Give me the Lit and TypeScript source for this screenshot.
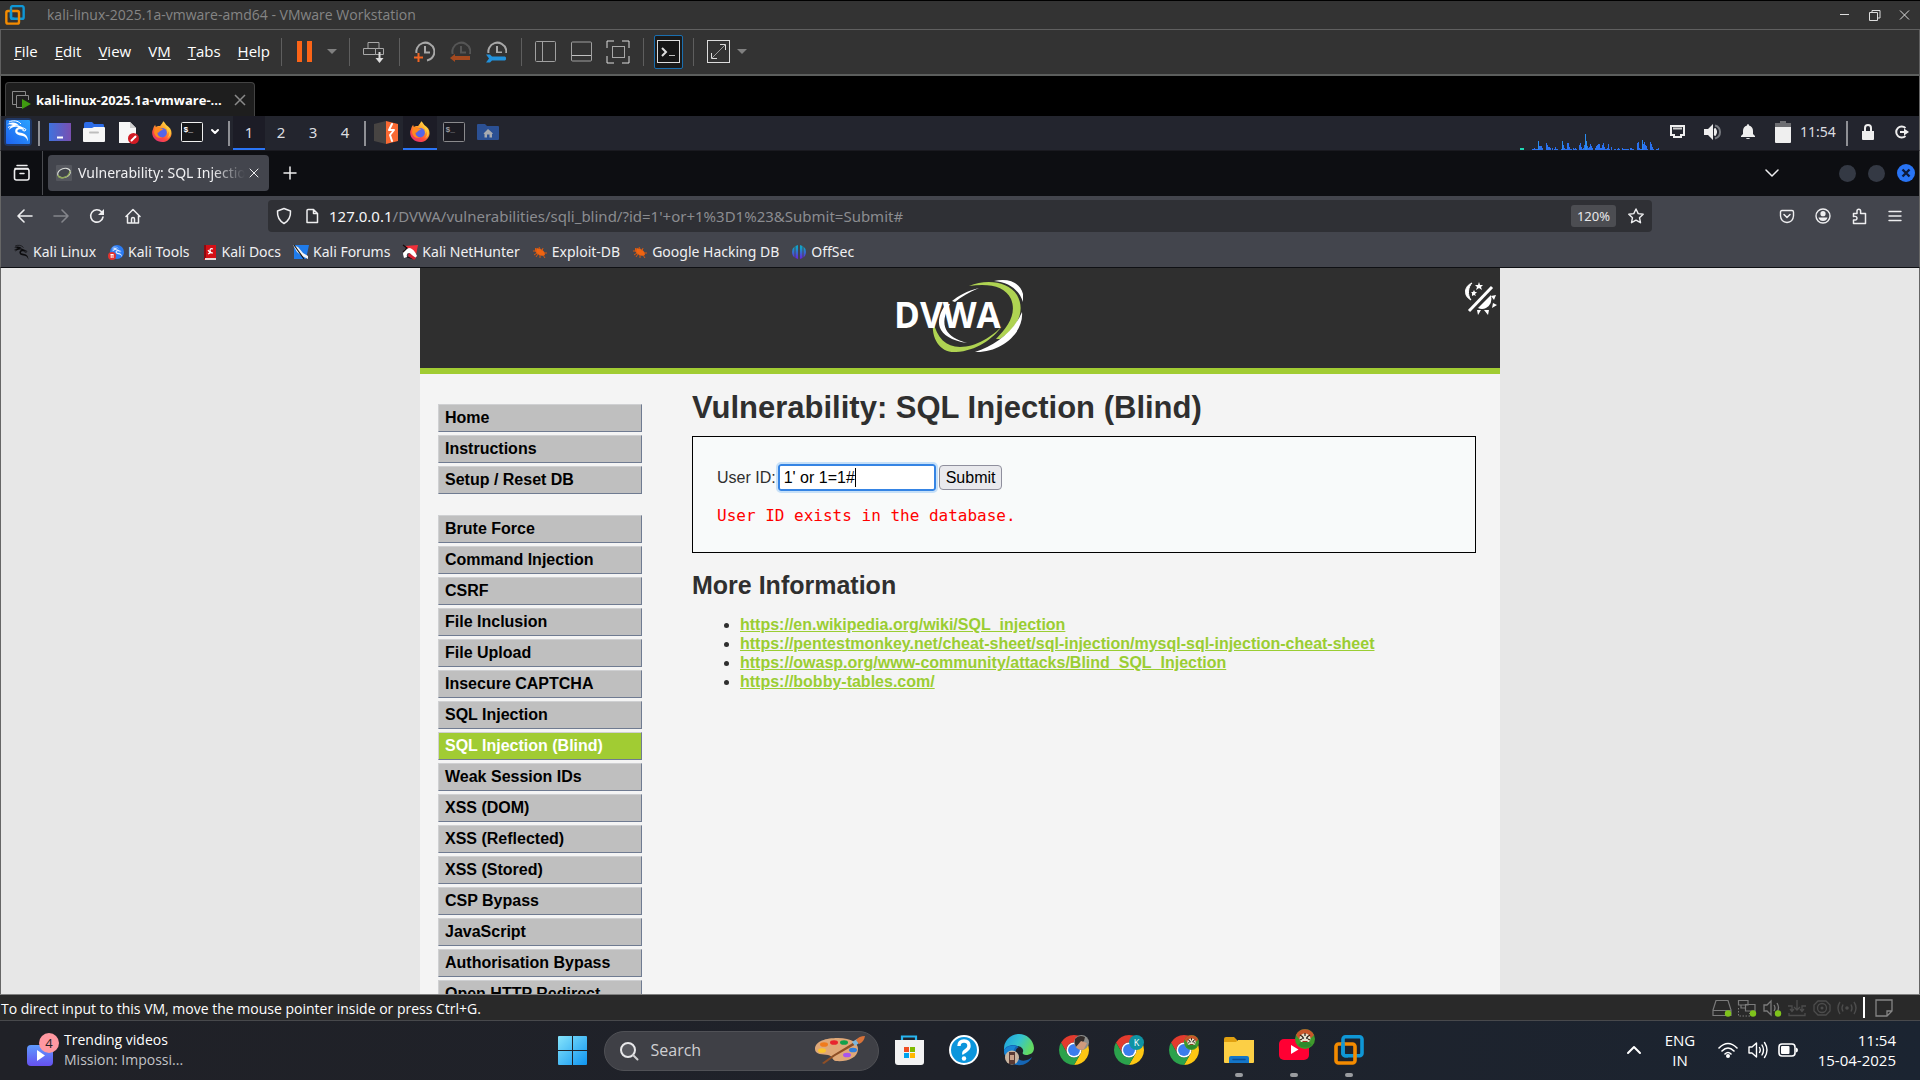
import { LitElement, html, svg, css, TemplateResult } from "lit";
import { customElement, state } from "lit/decorators.js";
import { classMap } from "lit/directives/class-map.js";

type Art = TemplateResult;

/* Wraps drawing content in an svg element of the given size and view box. */
const pic = (w: number, h: number, box: string, body: Art, cls = "ico") =>
  html`<svg class=${cls} width=${w} height=${h} viewBox=${box} aria-hidden="true">${body}</svg>`;

const line = (d: string, color: string, width = 1) =>
  svg`<path d=${d} fill="none" stroke=${color} stroke-width=${width} stroke-linecap="round" stroke-linejoin="round" />`;
const sharp = (d: string, color: string, width = 1) =>
  svg`<path d=${d} fill="none" stroke=${color} stroke-width=${width} />`;
const fill = (d: string, color: string) => svg`<path d=${d} fill=${color} />`;

const vmwareArt = svg`
  <rect x="9" y="1.7" width="19" height="19" rx="2.5" fill="none" stroke="#0f97d6" stroke-width="3.6" />
  <rect x="2" y="9" width="19" height="19" rx="2.5" fill="none" stroke="#f48b00" stroke-width="3.6" />
  <path d="M9 7.2V18.2a2.5 2.5 0 0 0 2.5 2.5H14" fill="none" stroke="#0f97d6" stroke-width="3.6" />`;

const firefoxArt = svg`
  <defs>
    <linearGradient id="ffBody" x1="0.8" y1="0" x2="0.2" y2="1">
      <stop offset="0" stop-color="#ffe14a" /><stop offset="0.4" stop-color="#ff9a2b" />
      <stop offset="0.7" stop-color="#ff4b3e" /><stop offset="1" stop-color="#e0307a" />
    </linearGradient>
  </defs>
  <path d="M2 9C2.4 6.700 3.400 5 4.400 3.800C4.400 4.800 4.700 5.700 5.200 6.200C6.200 5.300 8 4.900 9.600 5.200C10.600 3.400 12.200 2.300 12.700 0.300C14.200 1.200 15 2.900 16 4.100C19.400 6.200 21.600 9.200 21.500 12.800C21.300 18.300 17 22 11.700 22C5.800 22 1.400 17.800 1.200 12.300C1.100 11.100 1.500 9.900 2 9Z" fill="url(#ffBody)" />
  <circle cx="11.600" cy="12.200" r="5" fill="#5566e8" />
  <path d="M4 7.500C6.500 5.600 9 6.400 10 7.600C11.500 7.700 12.400 8.200 12.500 8.700C11.900 9.900 10 9.800 9 11C8.400 12 7.600 12.600 6.600 12C6.600 15 9 17.200 12 17C8 19 3.400 16 3.200 11.500Z" fill="#ff8a1f" />
  <path d="M14.500 5C17 7.500 17.600 10 17 13C18.200 12 18.400 11 18.500 10C19.600 13 19 16 17 18C21.500 15.600 22 9.500 17.600 6.200C16.500 5.500 15 3.500 14.500 5Z" fill="#ffd23e" opacity="0.85" />`;

const dragon = (color: string) => svg`
  <path d="M1 5.500C5 2.500 10 2.800 13 6.500C11.500 6 10 6.100 9 6.600C13.500 6 17.500 8 18.200 11.500C15 9.700 11.500 10.200 11.400 12C11.300 14 15.500 13.300 18.500 15C21 16.500 22 19 22 22.500C21 19.500 19.500 17.600 17 16.900C13.800 16 9.700 16 9.200 12.400C9 10 10.500 8.700 12.500 8.200C8.500 7 5 8.500 3 11C3.500 8.500 5 7 7 6C5 5 3 5 1 5.500Z" fill=${color} />
  <path d="M3 3C7 1 12 1.500 15 5M2 8.500C3.500 7.500 5 7 7 7M16.500 8.500L20 10.500L19 12L16.500 11.500" fill="none" stroke=${color} stroke-width="1" />`;

const chromeArt = svg`
  <path d="M24 13H43.050A22 22 0 0 0 4.950 13L14.470 29.500A11 11 0 0 1 24 13Z" fill="#e33b2e" />
  <path d="M43.050 13A22 22 0 0 1 24 46L33.530 29.500A11 11 0 0 0 24 13Z" fill="#fdc713" />
  <path d="M4.950 13A22 22 0 0 0 24 46L33.530 29.500A11 11 0 0 1 14.470 29.500Z" fill="#2ba24c" />
  <circle cx="24" cy="24" r="11" fill="#fff" /><circle cx="24" cy="24" r="8.700" fill="#3b7ded" />`;

const tigerArt = svg`
  <circle cx="10" cy="10" r="10" fill="#3f9a2c" />
  <path d="M1 6A10 10 0 0 1 19 6L16 9L10 7L4 10Z" fill="#c9562a" />
  <ellipse cx="10" cy="9.500" rx="5.500" ry="5" fill="#e8e2d0" />
  <path d="M5 6L8 8M15 6L12 8M10 4V7M5 11L7 10M15 11L13 10" stroke="#3a2416" stroke-width="1.300" />
  <circle cx="8" cy="9" r="1" fill="#222" /><circle cx="12" cy="9" r="1" fill="#222" />
  <path d="M7 12H13L10 15Z" fill="#a3301c" /><path d="M3 16Q10 21 17 16L14 13L6 13Z" fill="#2c8a2c" />`;

const clockArt = (color: string) => svg`
  ${sharp("M4 14A9 9 0 1 1 14 19.500", color, 2)}${sharp("M12 5V11.500H17", color, 2)}`;

const terminalArt = (bg: string, edge: string, ink: string) => svg`
  <rect x="0.500" y="0.500" width="21" height="19" rx="1" fill=${bg} stroke=${edge} />
  <text x="2.500" y="10" font-family="Liberation Mono, monospace" font-weight="700" font-size="8" fill=${ink}>$_</text>`;

const bugArt = svg`
  <ellipse cx="8" cy="8" rx="5.500" ry="3" transform="rotate(32 8 8)" fill="#ee6412" />
  <path d="M3 4L5 6M1 7H5M2 11L5 9M7 3L8 5M11 4L10 7M15 9L12 9M8 14L8 11M13 14L11 11M4 13L6 10" stroke="#d9570e" stroke-width="1" />`;

const BOOKMARKS: { label: string; art: Art }[] = [
  { label: "Kali Linux", art: svg`<g transform="scale(0.700)">${dragon("#0b0b0d")}</g>` },
  {
    label: "Kali Tools",
    art: svg`<circle cx="9" cy="8" r="7" fill="#2b7bf2" /><g transform="translate(3 2) scale(0.500)">${dragon("#dce9ff")}</g>
      <circle cx="4" cy="12" r="4" fill="#e0322f" /><path d="M2.500 10.500H5.500M3.200 10.500V14M5 10.500V14" stroke="#fff" stroke-width="1" />`,
  },
  {
    label: "Kali Docs",
    art: svg`<path d="M2 1H14V16H2Z" fill="#d40f16" /><path d="M2 1H4V15H2Z" fill="#8c0a10" /><path d="M3 14H14V16H3Z" fill="#e8d8d8" />
      <path d="M11 5Q8 4 8 6.500T11 9M6 6L8 9L6 10" fill="none" stroke="#fff" stroke-width="1.200" />`,
  },
  {
    label: "Kali Forums",
    art: svg`<path d="M1 1H16L13 15H1Z" fill="#1f7bea" /><path d="M0 1L5 3L10 9L15 12L15 15L9 12L4 8Z" fill="#f4f4f4" />
      <path d="M1 1L6 8L11 15" stroke="#161616" stroke-width="1.200" fill="none" />`,
  },
  {
    label: "Kali NetHunter",
    art: svg`<path d="M3 2L16 1L14 11L9 8Z" fill="#f0303a" /><path d="M1 10Q1 4 8 4Q12 5 15 12L12 15Q9 9 7 9Q4 9 5 13L2 14Z" fill="#fff" />
      <path d="M1 1L5 4L1 8M5 13L12 15" stroke="#19090b" stroke-width="1.300" fill="none" /><path d="M7 9L14 14L12 16L6 12Z" fill="#d51f33" />`,
  },
  { label: "Exploit-DB", art: bugArt },
  { label: "Google Hacking DB", art: bugArt },
  {
    label: "OffSec",
    art: svg`<defs><linearGradient id="off" x1="0" y1="0" x2="0" y2="1"><stop offset="0.200" stop-color="#12a0c8" /><stop offset="1" stop-color="#6a1fe0" /></linearGradient></defs>
      <path d="M3.500 2.500V13.500Q1 11.500 1 8T3.500 2.500ZM4.500 2L7 1V15L4.500 14ZM9 1L11.500 2V14L9 15ZM12.500 2.500Q15 4.500 15 8T12.500 13.500Z" fill="url(#off)" />`,
  },
];

const MENU_TOP = ["Home", "Instructions", "Setup / Reset DB"];
const MENU_VULNS = [
  "Brute Force", "Command Injection", "CSRF", "File Inclusion", "File Upload", "Insecure CAPTCHA",
  "SQL Injection", "SQL Injection (Blind)", "Weak Session IDs", "XSS (DOM)", "XSS (Reflected)",
  "XSS (Stored)", "CSP Bypass", "JavaScript", "Authorisation Bypass", "Open HTTP Redirect",
];
const LINKS = [
  "https://en.wikipedia.org/wiki/SQL_injection",
  "https://pentestmonkey.net/cheat-sheet/sql-injection/mysql-sql-injection-cheat-sheet",
  "https://owasp.org/www-community/attacks/Blind_SQL_Injection",
  "https://bobby-tables.com/",
];

/* CPU load, one bar per sample. */
const LOAD = [
  1, 1, 2, 1, 1, 1, 9, 4, 4, 4, 2, 0, 0, 0, 7, 5, 3, 3, 2, 0, 2, 0, 1, 3, 1, 1, 0, 0, 0, 1, 9, 5, 2, 1, 1, 7, 7, 3, 1, 1, 0, 2,
  1, 2, 1, 0, 0, 5, 7, 3, 1, 2, 5, 16, 9, 4, 2, 3, 6, 4, 2, 0, 0, 2, 4, 5, 6, 6, 2, 2, 5, 7, 3, 1, 1, 2, 6, 1, 0, 3, 0, 0, 1,
  1, 0, 1, 2, 1, 0, 0, 2, 1, 1, 1, 1, 1, 1, 0, 2, 2, 1, 1, 0, 0, 0, 7, 8, 2, 1, 1, 10, 6, 8, 5, 4, 1, 0, 0, 8, 6, 3, 1, 0, 0, 1, 1, 2,
];

@customElement("vm-chrome")
export class VmChrome extends LitElement {
  static styles = css`
    :host { display: block; background: #333; color: #fff; font: 15px/20px "Open Sans", "Noto Sans", sans-serif; }
    .title { display: flex; align-items: center; height: 28px; padding: 0 0 0 5px; border-top: 1px solid #000; color: #858585; font-size: 14px; }
    .title span { flex: 1; margin-left: 22px; }
    .title svg { display: block; }
    button { border: 0; margin: 0; padding: 0; background: none; color: inherit; font: inherit; display: flex; align-items: center; justify-content: center; }
    .win { width: 30px; }
    .bar { display: flex; align-items: center; height: 43px; padding: 0 0 1px 13px; border: 1px solid #606060; border-bottom: 2px solid #5c5e5d; }
    .menu { display: flex; gap: 17px; width: 260px; padding-bottom: 2px; flex: none; }
    .menu u { text-underline-offset: 2px; }
    .sep { width: 1px; height: 28px; background: #5e5e5e; margin: 0 6px 0 7px; flex: none; }
    .tool { width: 36px; height: 36px; }
    .pause { width: 34px; }
    .drop { width: 20px; }
    .on { width: 29px; height: 34px; margin: 0 3px 0 4px; background: #1a1a1a; border: 1px solid #1a6fb0; border-radius: 2px; }
    .tabs { display: flex; height: 40px; padding: 6px 0 0 4px; background: #000; border-left: 1px solid #666; border-right: 1px solid #666; box-sizing: border-box; }
    .tab { display: flex; align-items: center; gap: 5px; padding: 0 8px 0 6px; width: 234px; background: #1e1e1e; border: 1px solid #434343; border-bottom: 0; border-radius: 4px 4px 0 0; font-weight: 700; font-size: 13px; }
    .tab span { flex: 1; white-space: nowrap; }
  `;
  render() {
    const g = "#a8a8a8";
    return html`
      <div class="title">
        ${pic(20, 20, "0 0 30 30", vmwareArt)}
        <span>kali-linux-2025.1a-vmware-amd64 - VMware Workstation</span>
        <button class="win" aria-label="Minimize">${pic(12, 12, "0 0 12 12", sharp("M1 5.500H10", "#ddd"))}</button>
        <button class="win" aria-label="Restore">${pic(12, 12, "0 0 12 12", sharp("M0.500 3.500H8.500V11.500H0.500ZM3 3V1.500H11V9H9", "#ddd"))}</button>
        <button class="win" aria-label="Close">${pic(12, 12, "0 0 12 12", sharp("M1 1.500L10 10.500M10 1.500L1 10.500", "#ddd"))}</button>
      </div>
      <div class="bar">
        <nav class="menu">
          <button><span><u>F</u>ile</span></button><button><span><u>E</u>dit</span></button><button><span><u>V</u>iew</span></button>
          <button><span>V<u>M</u></span></button><button><span><u>T</u>abs</span></button><button><span><u>H</u>elp</span></button>
        </nav>
        <i class="sep"></i>
        <button class="pause" aria-label="Suspend">${pic(18, 22, "0 0 18 22", fill("M1 0H6V21H1ZM11 0H16V21H11Z", "#fb6417"))}</button>
        <button class="drop" aria-label="Power options">${pic(10, 6, "0 0 10 6", fill("M0 0H10L5 5Z", "#808080"))}</button>
        <i class="sep"></i>
        <button class="tool" aria-label="Send keys">${pic(22, 22, "0 0 22 22", svg`${sharp("M5 7V1.500H16V7M0.500 7.500H12.500V13.500H0.500ZM12.500 7.500H20.500V13.500H12.500", g)}${sharp("M16.500 11V20", "#ddd", 2)}${fill("M12.500 17H20.500L16.500 22Z", "#ddd")}`)}</button>
        <i class="sep"></i>
        <button class="tool" aria-label="Take snapshot">${pic(22, 22, "0 0 22 22", svg`${clockArt(g)}<rect y="12" width="6" height="10" fill="#333" />${sharp("M1 16.500H10M5.500 12V21", "#f06423", 2)}`)}</button>
        <button class="tool" aria-label="Revert snapshot">${pic(22, 22, "0 0 22 22", svg`${clockArt("#555")}<rect y="13" width="22" height="8" fill="#333" />${fill("M1 17L6 13V15H21V19H6V21Z", "#a4491f")}`)}</button>
        <button class="tool" aria-label="Manage snapshots">${pic(22, 22, "0 0 22 22", svg`${clockArt(g)}<rect y="12" width="22" height="10" fill="#333" />${fill("M1 13.500H5L7 15.500H20L21 16.500V18.500L20 19.500H7L5 21.500H1L4 17.500Z", "#2292dc")}`)}</button>
        <i class="sep"></i>
        <button class="tool" aria-label="Library">${pic(22, 22, "0 0 22 22", svg`<rect x="0.500" y="0.500" width="20" height="20" rx="1" fill="none" stroke="#a0a0a0" />${sharp("M7.500 1V20", "#a0a0a0")}`)}</button>
        <button class="tool" aria-label="Thumbnail bar">${pic(22, 22, "0 0 22 22", svg`<rect x="0.500" y="1" width="20" height="19" rx="1" fill="none" stroke="#a0a0a0" />${sharp("M1 14.500H20", "#c0c0c0")}`)}</button>
        <button class="tool" aria-label="Full screen">${pic(24, 24, "0 0 24 24", svg`${sharp("M8 1H1V8M16 1H23V8M1 16V23H8M23 16V23H16", "#ddd", 1)}<rect x="6.500" y="6.500" width="12" height="11" fill="none" stroke=${g} />`)}</button>
        <i class="sep"></i>
        <button class="on" aria-label="Console view">${pic(23, 23, "0 0 23 23", svg`<rect x="0.500" y="0.500" width="22" height="22" fill="#151515" stroke="#ddd" />${sharp("M5 8L9 12L5 16", "#ddd", 2)}${sharp("M12 15.500H18", "#bbb")}`)}</button>
        <i class="sep"></i>
        <button class="tool" aria-label="Stretch guest">${pic(23, 23, "0 0 23 23", svg`<rect x="0.500" y="0.500" width="22" height="22" fill="none" stroke="#ddd" />${sharp("M4.500 13V18.500H10M13 4.500H18.500V10", "#ddd")}${sharp("M5 18L18 5", "#999")}`)}</button>
        <button aria-label="Stretch options">${pic(12, 6, "0 0 12 6", fill("M1 0H11L6 5Z", "#808080"))}</button>
      </div>
      <div class="tabs">
        <div class="tab">
          ${pic(19, 18, "0 0 19 18", svg`${sharp("M13.500 4V0.500H0.500V13.500H4M10 16.500H4.500V4.500H16.500V9", "#8a8a8a")}${fill("M10 8L19 13L10 18Z", "#3f9a10")}`)}
          <span>kali-linux-2025.1a-vmware-...</span>
          <button aria-label="Close tab">${pic(12, 12, "0 0 12 12", sharp("M1 1L11 11M11 1L1 11", "#8a8a8a", 1.5))}</button>
        </div>
      </div>`;
  }
}

@customElement("kali-panel")
export class KaliPanel extends LitElement {
  static styles = css`
    :host { display: flex; align-items: center; height: 34px; box-sizing: content-box; background: #23252e; color: #dcdde0; border-bottom: 1px solid #1a1a20; border-left: 1px solid #555; border-right: 1px solid #666; font: 15px/20px "Noto Sans", sans-serif; }
    button { display: flex; align-items: center; justify-content: center; align-self: stretch; width: 34px; padding: 0; border: 0; background: none; color: inherit; font: inherit; border-bottom: 2px solid transparent; }
    .active { background: #1c1c26; border-bottom-color: #2a74f5; }
    .ws { width: 32px; }
    .term { width: 26px; }
    .chev { width: 20px; }
    .gap { flex: 1; }
    .sep { width: 2px; height: 25px; background: #8f9095; margin: 0 3px; flex: none; }
    .graph { align-self: flex-end; }
    .tray { width: 35px; }
    time { width: 43px; padding-bottom: 2px; white-space: nowrap; font-size: 14px; }
  `;
  render() {
    return html`
      <button aria-label="Applications">${pic(28, 28, "0 0 28 28", svg`
        <defs><linearGradient id="kb" x1="0" y1="1" x2="1" y2="0"><stop offset="0" stop-color="#1e63f0" /><stop offset="1" stop-color="#2aa2ff" /></linearGradient></defs>
        <rect x="0" y="0" width="28" height="28" rx="4" fill="#1e58c8" opacity="0.350" /><rect x="2" y="2" width="24" height="24" rx="1" fill="url(#kb)" />
        <g transform="translate(2 1)">${dragon("#fff")}</g>`)}</button>
      <i class="sep"></i>
      <button aria-label="Show desktop">${pic(22, 18, "0 0 22 18", svg`
        <defs><linearGradient id="dk"><stop offset="0" stop-color="#3f72dd" /><stop offset="1" stop-color="#7a4fb0" /></linearGradient></defs>
        <rect width="22" height="18" fill="url(#dk)" />${sharp("M8 14.500H14", "#fff", 2)}`)}</button>
      <button aria-label="Files">${pic(22, 20, "0 0 22 20", svg`${fill("M1 2Q1 0 3 0H9L11 2H20Q21 2 21 4V9H1Z", "#2c6ce8")}${fill("M0 7Q0 6 1 6H9L11 5H21Q22 5 22 6V19Q22 20 21 20H1Q0 20 0 19Z", "#f6f6f6")}${line("M7 10.500H15", "#bdbdbd", 2)}`)}</button>
      <button aria-label="Text editor">${pic(22, 23, "0 0 22 23", svg`${fill("M2 1H13L19 7V22H2Z", "#f7f7f7")}${fill("M13 1V7H19Z", "#cfcfcf")}<circle cx="16.500" cy="17.500" r="5.500" fill="#d11b24" />${line("M14.500 19.500L18.500 15.500", "#fff", 2)}`)}</button>
      <button aria-label="Firefox">${pic(22, 22, "0 0 23 23", firefoxArt)}</button>
      <button class="term" aria-label="Terminal">${pic(22, 20, "0 0 22 20", terminalArt("#17181b", "#f0f0f0", "#fff"))}</button>
      <button class="chev" aria-label="More launchers">${pic(10, 8, "0 0 10 8", line("M2 2L5 5L8 2", "#fff", 2))}</button>
      <i class="sep"></i>
      ${[1, 2, 3, 4].map((n) => html`<button class=${classMap({ ws: true, active: n === 1 })}>${n}</button>`)}
      <i class="sep"></i>
      <button aria-label="Burp Suite">${pic(24, 23, "0 0 24 23", svg`${fill("M0 3L12 0V23L0 20Z", "#474442")}${fill("M12 0L24 3V20L12 23Z", "#fb6a33")}${line("M18 3L15 9H20L16 14L18 20", "#fff", 2)}`)}</button>
      <button class="active" aria-label="Firefox window">${pic(22, 22, "0 0 23 23", firefoxArt)}</button>
      <button aria-label="Terminal window">${pic(22, 20, "0 0 22 20", terminalArt("#1b1b22", "#8a8a8d", "#9a9a9d"))}</button>
      <button aria-label="Home folder">${pic(22, 16, "0 0 22 16", svg`${fill("M0 1Q0 0 1 0H8L10 2H21Q22 2 22 3V15Q22 16 21 16H1Q0 16 0 15Z", "#2b5093")}${fill("M11 5L16 9.500L15 10V13.500H12.500V10.500H10V13.500H7.500V10L6.500 9.500Z", "#a8abb0")}`)}</button>
      <span class="gap"></span>
      ${pic(140, 18, "0 0 140 18", svg`<rect y="16" width="4" height="2" fill="#1fd8b4" />
        ${LOAD.map((v, i) => (v ? svg`<rect x=${12 + i} y=${18 - v} width="1" height=${v} fill=${v > 8 ? "#2a8cf0" : "#2a72f0"} />` : svg``))}`, "graph")}
      <button class="tray" aria-label="Network">${pic(17, 14, "0 0 17 14", svg`<path d="M2 1H15V10H12V12H5V10H2Z" fill="none" stroke="#eee" stroke-width="2" />${sharp("M4 3.500H13", "#ccc", 2)}`)}</button>
      <button class="tray" aria-label="Volume">${pic(18, 16, "0 0 18 16", svg`${fill("M0 5H4L9 0V16L4 11H0Z", "#eee")}${fill("M10 4Q13 8 10 12Z", "#eee")}${sharp("M11 1.500Q16 3 16 8T11 14.500", "#777a80", 2)}${sharp("M10.500 4.500Q13.500 8 10.500 11.500", "#eee", 2)}`)}</button>
      <button class="tray" aria-label="Notifications">${pic(14, 16, "0 0 14 16", fill("M7 0Q8 0 8 1.500Q12 2.500 12 7V10L14 12V13H0V12L2 10V7Q2 2.500 6 1.500Q6 0 7 0ZM5 14H9Q9 15 7 15T5 14Z", "#eee"))}</button>
      <button class="tray" aria-label="Battery">${pic(16, 22, "0 0 16 22", svg`${fill("M5 0H11V2H16V7H0V2H5Z", "#6d6e72")}${fill("M0 6H16V21Q16 22 15 22H1Q0 22 0 21Z", "#efefef")}`)}</button>
      <time>11:54</time>
      <i class="sep"></i>
      <button aria-label="Lock">${pic(14, 16, "0 0 14 16", svg`${fill("M1 7H13V15Q13 16 12 16H2Q1 16 1 15Z", "#eee")}${sharp("M4 8V4Q4 1 7 1T10 4V8", "#eee", 2)}`)}</button>
      <button aria-label="Log out">${pic(16, 14, "0 0 16 14", svg`${sharp("M11.500 3A5.500 5.500 0 1 0 11.500 11", "#eee", 2)}${sharp("M6 7H12", "#eee", 2)}${fill("M10 3.500L15 7L10 10.500Z", "#eee")}`)}</button>`;
  }
}

@customElement("fox-toolbar")
export class FoxToolbar extends LitElement {
  static styles = css`
    :host { display: block; background: #43454d; color: #f0f0f2; border-left: 1px solid #666; border-right: 1px solid #666; border-bottom: 1px solid #0f1014; font: 15px/20px "Noto Sans", sans-serif; }
    button { display: flex; align-items: center; justify-content: center; padding: 0; border: 0; background: none; color: inherit; font: inherit; flex: none; }
    .tabs { display: flex; align-items: center; height: 44px; padding-bottom: 1px; background: #0d0e12; }
    .all { width: 42px; height: 44px; border-right: 1px solid #4a4b50; }
    .tab { display: flex; align-items: center; width: 221px; height: 36px; margin-left: 5px; padding: 0 6px 0 8px; box-sizing: border-box; background: #43454d; border-radius: 4px; }
    .name { flex: 1; margin: 0 0 0 6px; overflow: hidden; white-space: nowrap; font-size: 14px; mask-image: linear-gradient(90deg, #000 80%, transparent); }
    .x { width: 18px; height: 20px; }
    .plus { width: 42px; }
    .gap { flex: 1; }
    .list { width: 36px; margin-right: 49px; }
    .dots { display: flex; align-items: center; gap: 12px; margin-right: 4px; }
    .dots button { width: 17px; height: 17px; border-radius: 50%; background: #343944; }
    .dots .shut { width: 18px; height: 18px; background: #2874f5; }
    .nav { display: flex; align-items: center; height: 40px; padding: 0 6px; }
    .nav > button { width: 36px; height: 32px; }
    .addr { display: flex; align-items: center; flex: 1; height: 32px; margin: 0 117px; padding: 0 8px; background: #2f3035; border-radius: 4px; color: #8b8c90; }
    .addr b { color: #f6f6f8; font-weight: 400; }
    .url { flex: 1; margin-left: 10px; white-space: nowrap; }
    .addr .page { margin-left: 13px; }
    .zoom { width: 45px; height: 22px; margin-right: 12px; background: #4c4d52; border-radius: 3px; color: #e8e8ea; font-size: 13px; }
    .marks { display: flex; gap: 12px; height: 31px; align-items: center; padding: 0 12px; }
    .marks a { display: flex; align-items: center; gap: 4px; color: inherit; text-decoration: none; white-space: nowrap; font-size: 14px; }
  `;
  render() {
    const c = "#eeeef0";
    return html`
      <div class="tabs">
        <button class="all" aria-label="View all tabs">${pic(18, 18, "0 0 18 18", svg`${line("M4 1.500H14", c, 1.5)}<rect x="1.500" y="5" width="14.500" height="11" rx="2" fill="none" stroke=${c} stroke-width="1.600" />${line("M2 4.500H15M7 9.500H11", c, 1.5)}`)}</button>
        <div class="tab">
          ${pic(16, 16, "0 0 16 16", svg`<rect width="16" height="16" rx="1" fill="#55575e" /><ellipse cx="8" cy="8" rx="6.500" ry="4.500" transform="rotate(-18 8 8)" fill="#42454c" stroke="#d9dbd8" stroke-width="1.200" /><path d="M2 10Q3 13.500 8 12.500T14 6" fill="none" stroke="#8ea857" stroke-width="1.300" />`)}
          <p class="name">Vulnerability: SQL Injection (Blind)</p>
          <button class="x" aria-label="Close tab">${pic(10, 10, "0 0 10 10", line("M1 1L9 9M9 1L1 9", c, 1))}</button>
        </div>
        <button class="plus" aria-label="New tab">${pic(14, 14, "0 0 14 14", line("M7 1V13M1 7H13", c, 1.5))}</button>
        <span class="gap"></span>
        <button class="list" aria-label="List tabs">${pic(14, 10, "0 0 14 10", line("M1 2L7 8L13 2", c, 1.5))}</button>
        <div class="dots"><button aria-label="Minimize"></button><button aria-label="Maximize"></button>
          <button class="shut" aria-label="Close">${pic(10, 10, "0 0 10 10", sharp("M1.500 1.500L8.500 8.500M8.500 1.500L1.500 8.500", "#0d1a3a", 2.4))}</button></div>
      </div>
      <div class="nav">
        <button aria-label="Back">${pic(16, 14, "0 0 16 14", line("M15 7H1M7 1L1 7L7 13", c, 1.6))}</button>
        <button aria-label="Forward">${pic(16, 14, "0 0 16 14", line("M1 7H15M9 1L15 7L9 13", "#84858b", 1.6))}</button>
        <button aria-label="Reload">${pic(16, 16, "0 0 16 16", svg`${line("M14 9A6.200 6.200 0 1 1 12.500 3.800L14 5.500", c, 1.6)}${fill("M15 1V7H9Z", c)}`)}</button>
        <button aria-label="Home">${pic(16, 16, "0 0 16 16", line("M1 8.500L8 1.500L15 8.500M2.500 8V15H13.500V8M6.500 15V11Q6.500 9.500 8 9.500T9.500 11V15", c, 1.5))}</button>
        <div class="addr">
          ${pic(16, 18, "0 0 16 18", line("M8 1.500L14.500 4Q15 12.500 8 16.500Q1 12.500 1.500 4Z", c, 1.5))}
          ${pic(14, 16, "0 0 14 16", line("M2 2.500Q2 1.500 3 1.500H8.500L12.500 5.500V14.500H2ZM8.500 1.500V5.500H12.500", c, 1.5), "page")}
          <span class="url"><b>127.0.0.1</b>/DVWA/vulnerabilities/sqli_blind/?id=1'+or+1%3D1%23&Submit=Submit#</span>
          <button class="zoom">120%</button>
          ${pic(16, 16, "0 0 16 16", line("M8 1L10.200 5.600L15.200 6.200L11.500 9.700L12.500 14.700L8 12.200L3.500 14.700L4.500 9.700L0.800 6.200L5.800 5.600Z", c, 1.4))}
        </div>
        <button aria-label="Save to Pocket">${pic(16, 15, "0 0 16 15", svg`${line("M1.500 3Q1.500 1.500 3 1.500H13Q14.500 1.500 14.500 3V7Q14 13 8 13.500Q2 13 1.500 7Z", c, 1.4)}${line("M5 5.500L8 8.500L11 5.500", c, 1.5)}`)}</button>
        <button aria-label="Account">${pic(16, 16, "0 0 16 16", svg`<circle cx="8" cy="8" r="7" fill="none" stroke=${c} stroke-width="1.400" /><circle cx="8" cy="5.700" r="2.600" fill=${c} />${fill("M3.500 9.500H12.500Q11.500 13 8 13T3.500 9.500Z", c)}`)}</button>
        <button aria-label="Extensions">${pic(15, 17, "0 0 15 17", line("M1.500 5.500H5V3Q5 1.200 6.800 1.200T8.600 3V5.500H13.500V15.500H1.500V12Q5 12.500 5 10.200T1.500 8.500Z", c, 1.5))}</button>
        <button aria-label="Application menu">${pic(14, 12, "0 0 14 12", line("M1 1.500H13M1 6H13M1 10.500H13", c, 1.4))}</button>
      </div>
      <nav class="marks">${BOOKMARKS.map((b) => html`<a href="#">${pic(16, 16, "0 0 16 16", b.art)}${b.label}</a>`)}</nav>`;
  }
}

@customElement("dvwa-page")
export class DvwaPage extends LitElement {
  static styles = css`
    :host { display: block; overflow: hidden; background: #e7e7e7; color: #2f2f2f; border-left: 1px solid #666; border-right: 1px solid #666; font: 16px/19px "Liberation Sans", Arial, sans-serif; }
    .sheet { max-width: 1080px; min-height: 100%; margin: 0 auto; background: #f4f4f4; }
    header { display: grid; grid-template-columns: 1fr auto 1fr; height: 88px; padding-top: 12px; background: #2f2f2f; border-bottom: 6px solid #a1cc33; }
    header svg { display: block; overflow: visible; }
    .logo { grid-column: 2; }
    .theme { justify-self: end; align-self: start; margin: 2px 3px 0 0; padding: 0; border: 0; background: none; }
    .cols { display: flex; gap: 50px; padding: 0 24px 0 18px; }
    nav { flex: none; width: 204px; padding-top: 30px; }
    ul { margin: 0; padding: 0; }
    nav ul { list-style: none; margin-bottom: 21px; }
    nav li { margin-bottom: 3px; }
    nav li:last-child { margin-bottom: 0; }
    nav a { display: block; padding-left: 6px; border: 1px solid #6f7b91; border-top-color: #cfd0d2; border-left-color: #cfd0d2; background: #bfbfbf; color: #000; font-weight: 700; line-height: 26px; text-decoration: none; }
    nav a.here { background: #a1cc33; color: #fff; }
    main { flex: 1; padding-top: 16px; }
    h1 { margin: 0 0 10px; font-size: 31px; line-height: 36px; }
    h2 { margin: 18px 0 15px; font-size: 25px; line-height: 29px; }
    .box { padding: 27px 24px; border: 1px solid #000; background: #f8fafa; }
    form { display: flex; align-items: center; }
    label { margin: 0 2px 0 0; }
    .field { position: relative; display: flex; }
    .caret { position: absolute; left: 77px; top: 4px; width: 1px; height: 19px; background: #000; }
    input { width: 158px; height: 27px; padding: 0 4px; box-sizing: border-box; border: 2px solid #3584e4; border-radius: 3px; outline: 2px solid #c6e0f8; background: #fff; color: #000; font: inherit; }
    .send { height: 25px; margin-left: 3px; padding: 0 6px; border: 1px solid #8f8f9d; border-radius: 4px; background: #e9e9ed; color: #000; font: inherit; }
    pre { margin: 15px 0 0; color: #f00; font: 16px/19px "DejaVu Sans Mono", monospace; }
    main ul { padding-left: 48px; }
    main a { color: #9acd32; font-weight: 700; text-decoration: underline; }
  `;
  @state() private userId = "1' or 1=1#";
  @state() private touched = false;
  private item(label: string) {
    return html`<li><a href="#" class=${classMap({ here: label === "SQL Injection (Blind)" })}>${label}</a></li>`;
  }
  render() {
    return html`
      <div class="sheet">
        <header>
          ${pic(128, 72, "0 0 128 72", svg`
            <path d="M73 6C90 -1 112 1 121 15C129 29 124 46 104 59L100 59C112 47 121 34 115 19C109 6 93 3 73 6Z" fill="#afd352" />
            <path d="M37 41C35 59 44 73 60 72C80 71 97 59 106 46C97 56 80 67 64 67C50 67 41 58 37 41Z" fill="#afd352" />
            <path d="M98 1C112 -2 124 2 127 14L127 22C123 10 113 2 98 1Z" fill="#fff" />
            <path d="M126 32C128 53 105 73 79 72C98 66 117 53 126 32Z" fill="#fff" />
            <path d="M83 8C71 11 62 16 56 21L59 22C65 17 73 12 83 8Z" fill="#fff" />
            <text x="-2" y="48" font-family="Open Sans, sans-serif" font-weight="700" font-size="35" fill="#fff">DVWA</text>
            <path d="M50 24C38 40 39 58 71 63C50 57 42 46 54 24Z" fill="#fff" />`, "logo")}
          <button class="theme" aria-label="Toggle theme">${pic(33, 33, "0 0 33 33", svg`
            <path d="M8 1C0 4 -1 14 7 18C3 13 4 5 8 1Z" fill="#fff" stroke="#fff" />
            <path d="M15 0L16 3H19L17 5L18 8L15 6L12 8L13 5L11 3H14ZM10 8L11 10H13L11 12L12 14L10 13L8 14V11L7 10H9Z" fill="#fff" />
            <path d="M5 29L28 5" stroke="#fff" stroke-width="3" />
            <path d="M14 26L27 13Q29 22 22 26Q18 28 14 26Z" fill="#fff" />
            <path d="M27 14L32 13L30 18ZM29 21L33 23L28 26ZM20 28L25 28L24 33ZM13 28L17 28L14 33Z" fill="#fff" />`)}</button>
        </header>
        <div class="cols">
          <nav><ul>${MENU_TOP.map((m) => this.item(m))}</ul><ul>${MENU_VULNS.map((m) => this.item(m))}</ul></nav>
          <main>
            <h1>Vulnerability: SQL Injection (Blind)</h1>
            <section class="box">
              <form @submit=${(e: Event) => e.preventDefault()}>
                <label for="uid">User ID:</label>
                <span class="field">
                  <input id="uid" type="text" .value=${this.userId} @focus=${() => (this.touched = true)}
                    @input=${(e: Event) => (this.userId = (e.target as HTMLInputElement).value)} />
                  ${this.touched ? "" : html`<i class="caret"></i>`}
                </span>
                <button class="send">Submit</button>
              </form>
              <pre>User ID exists in the database.</pre>
            </section>
            <h2>More Information</h2>
            <ul>${LINKS.map((l) => html`<li><a href=${l}>${l}</a></li>`)}</ul>
          </main>
        </div>
      </div>`;
  }
}

@customElement("vm-status")
export class VmStatus extends LitElement {
  static styles = css`
    :host { display: flex; align-items: center; height: 25px; padding: 0 27px 0 1px; background: #292929; color: #fff; border-top: 1px solid #808080; border-bottom: 1px solid #48494c; font: 14px/20px "Open Sans", "Noto Sans", sans-serif; }
    span { flex: 1; padding-top: 2px; }
    .dev { width: 25px; display: flex; justify-content: center; }
    .dev svg { overflow: visible; }
    .sep { width: 2px; height: 21px; background: #fff; margin: 0 10px 0 4px; }
  `;
  render() {
    const g = "#7b7b7b";
    const d = "#4c4c4c";
    const dot = svg`<circle cx="16" cy="14.500" r="3.200" fill="#7fc31c" />`;
    const devices = [
      svg`${sharp("M4 1.500H16L19 11V16.500H1V11ZM1 11.500H19", g, 1.2)}${dot}`,
      svg`${sharp("M1.500 1.500H11V6H1.500ZM8.500 5.500H18V12H8.500ZM12 14.500H15M4 6V9H8", g, 1.2)}<path d="M1.500 9V17H14" fill="none" stroke=${g} stroke-dasharray="1.500 1.500" />${dot}`,
      svg`${sharp("M2 6H5L9 2V16L5 12H2ZM12 6Q14 9 12 12M15 4Q18 9 15 13", g, 1.3)}${dot}`,
      svg`${sharp("M2 14V16.500H18V14M10 1V10M7 8L10 11L13 8M1 7H5V12M3 10L5 12.500L7 10M19 7H15V12M13 10L15 12.500L17 10", d, 1.3)}`,
      svg`<path d="M6 2H14L18 6V12L14 16H6L2 12V6Z" fill="none" stroke=${d} stroke-width="1.300" /><circle cx="10" cy="9" r="4.500" fill="none" stroke=${d} stroke-width="1.300" /><circle cx="10" cy="9" r="1.500" fill=${d} />`,
      svg`${sharp("M3 3Q-1 9 3 15M6 5.500Q4 9 6 12.500M14 5.500Q16 9 14 12.500M17 3Q21 9 17 15", d, 1.4)}<circle cx="10" cy="9" r="1.800" fill=${d} />`,
    ];
    return html`
      <span>To direct input to this VM, move the mouse pointer inside or press Ctrl+G.</span>
      ${devices.map((a) => html`<i class="dev">${pic(20, 18, "0 0 20 18", a)}</i>`)}
      <i class="sep"></i>
      ${pic(18, 18, "0 0 18 18", sharp("M1 1H17V12L12 17H1ZM12 17V12H17", "#858585", 1.3))}`;
  }
}

@customElement("win-taskbar")
export class WinTaskbar extends LitElement {
  static styles = css`
    :host { display: grid; grid-template-columns: 1fr auto 1fr; height: 59px; background: linear-gradient(90deg, #202127 0%, #1f222a 50%, #1b2431 100%); color: #fff; font: 14px/20px "Open Sans", "Noto Sans", sans-serif; }
    button { display: flex; align-items: center; padding: 0; border: 0; background: none; color: inherit; font: inherit; text-align: left; }
    .widget { gap: 3px; padding: 0 0 2px 26px; }
    .widget svg { display: block; }
    .sub { color: #c2c3c6; }
    .mid { display: flex; align-items: stretch; padding-left: 2px; }
    .app { width: 55px; flex-direction: column; padding-top: 11px; gap: 4px; box-sizing: border-box; justify-content: flex-start; }
    .app i { width: 8px; height: 4px; border-radius: 2px; background: #9a9ca0; }
    .app svg { overflow: visible; display: block; }
    .search { display: flex; align-items: center; align-self: center; gap: 12px; width: 275px; height: 40px; margin: 0 3px; padding: 0 12px 0 14px; box-sizing: border-box; background: #3f4046; border: 1px solid #505156; border-radius: 20px; }
    .search input { flex: 1; min-width: 0; border: 0; padding: 0 0 1px; background: none; outline: 0; color: #fff; font: inherit; font-size: 16px; }
    .search input::placeholder { color: #cfcfd2; opacity: 1; }
    .right { display: flex; align-items: center; justify-content: flex-end; padding: 0 24px 2px 0; font-size: 15px; }
    .lang { display: block; width: 76px; text-align: center; }
    .sys { gap: 10px; margin-right: 8px; }
    .clock { display: block; width: 90px; text-align: right; }
  `;
  private app(name: string, body: Art, running = false) {
    return html`<button class="app" aria-label=${name}>${pic(30, 37, "0 -3 30 37", body)}${running ? html`<i></i>` : ""}</button>`;
  }
  render() {
    const chrome = svg`<g transform="scale(0.682) translate(-2 -2)">${chromeArt}</g>`;
    return html`
      <button class="widget">
        ${pic(35, 36, "0 0 35 36", svg`
          <defs><linearGradient id="tv" x1="0" y1="0" x2="0" y2="1"><stop offset="0" stop-color="#5f9bff" /><stop offset="1" stop-color="#6650ee" /></linearGradient></defs>
          <rect x="1" y="13" width="26" height="21" rx="4" fill="url(#tv)" />${fill("M11 18L19 23.500L11 29Z", "#fff")}
          <circle cx="23" cy="11" r="10" fill="#ff98a1" />
          <text x="23" y="16" text-anchor="middle" font-family="Open Sans, sans-serif" font-size="13" fill="#222">4</text>`)}
        <span><span>Trending videos</span><br /><span class="sub">Mission: Impossi...</span></span>
      </button>
      <div class="mid">
        ${this.app("Start", svg`
          <defs><linearGradient id="wn" x1="0" y1="0" x2="1" y2="1"><stop offset="0" stop-color="#86e4fb" /><stop offset="1" stop-color="#0f95f0" /></linearGradient></defs>
          <path d="M0 2Q0 1 1 1H14V15H0ZM15 1H28Q29 1 29 2V15H15ZM0 16H14V30H1Q0 30 0 29ZM15 16H29V29Q29 30 28 30H15Z" fill="url(#wn)" />`)}
        <label class="search">
          ${pic(20, 20, "0 0 20 20", svg`<circle cx="9" cy="9" r="7" fill="#55565c" stroke="#e8e8ea" stroke-width="2" />${line("M14 14L18.500 18.500", "#d0d0d2", 2)}`)}
          <input type="search" placeholder="Search" aria-label="Search" />
          ${pic(52, 30, "0 0 52 30", svg`
            <path d="M1 13C1 5 12 2 24 2C38 2 44 7 44 13C44 22 33 26 22 25C18 24.500 19 20 14 19C9 18 1 19 1 13Z" fill="#dfa878" />
            <ellipse cx="10" cy="8.500" rx="4" ry="2.300" fill="#f07b1c" /><ellipse cx="20" cy="6.500" rx="4" ry="2.300" fill="#e8252e" /><ellipse cx="30" cy="6.500" rx="4" ry="2.300" fill="#13a14b" />
            <ellipse cx="8" cy="14.500" rx="4" ry="2.300" fill="#fbc42c" /><ellipse cx="39" cy="14" rx="4" ry="2.300" fill="#2f7fdc" /><ellipse cx="33" cy="19" rx="4" ry="2.300" fill="#a855ee" />
            <path d="M8 27L19 19L42 5L44 7L21 20L10 28Z" fill="#8f4f26" /><path d="M38 6L41 10L45 7L43 3Z" fill="#7db6dc" /><path d="M42 4Q45 0 51 0Q50 6 45 8Z" fill="#d8733a" />`)}
        </label>
        ${this.app("Microsoft Store", svg`
          <path d="M8 6V1.500H22V6" fill="none" stroke="#28b5f0" stroke-width="2.200" /><path d="M1 5H30V27Q30 30 27 30H4Q1 30 1 27Z" fill="#f3f3f3" />
          <path d="M10 12H15V17H10Z" fill="#f04e23" /><path d="M16 12H21V17H16Z" fill="#7fba00" /><path d="M10 18H15V23H10Z" fill="#00a3ee" /><path d="M16 18H21V23H16Z" fill="#ffb800" />`)}
        ${this.app("Get Help", svg`<circle cx="15" cy="15" r="14" fill="#0b95dc" stroke="#fff" stroke-width="2" />
          <path d="M10 11Q10 6 15 6T20 11Q20 13.500 17 15.500T15 19" fill="none" stroke="#fff" stroke-width="3.400" /><circle cx="15" cy="23.500" r="2.200" fill="#fff" />`)}
        ${this.app("Microsoft Edge", svg`
          <defs><linearGradient id="eg" x1="0" y1="0" x2="1" y2="0.400"><stop offset="0" stop-color="#1b9de2" /><stop offset="0.550" stop-color="#35c4cf" /><stop offset="1" stop-color="#62d962" /></linearGradient></defs>
          <path d="M0 15A15 15 0 0 1 30 13C30 18 26 20 22 20C19 20 18 18.500 19 17C20 14 17 11 13 11C6 11 2 14 0 15Z" fill="url(#eg)" />
          <path d="M0 15C3 9 12 9 15 12C10 14 10 22 16 25C21 27 26 24 28 22C24 31 12 33 5 26C1 22 0 18 0 15Z" fill="#1565b4" />
          <path d="M0 15C3 11 8 10 12 11C8 16 9 25 14 29C6 29 0 23 0 15Z" fill="#1784d4" />
          <circle cx="8" cy="22.500" r="7" fill="#c8b4a0" /><path d="M5 17H11V29H5Z" fill="#5a3a34" /><path d="M6 20H10V25H6Z" fill="#caa28a" />`)}
        ${this.app("Chrome", svg`${chrome}<circle cx="22.500" cy="7.500" r="7.500" fill="#8d8f8c" /><path d="M16 4Q20 -1 26 2L25 6L17 12Q15 8 16 4Z" fill="#332c2a" /><path d="M17 12L22 6L28 8L25 14Q20 16 17 12Z" fill="#cf9a7c" />`)}
        ${this.app("Chrome, second profile", svg`${chrome}<circle cx="22.500" cy="7.500" r="7.500" fill="#0f93a4" /><text x="22.500" y="11" text-anchor="middle" font-family="Open Sans, sans-serif" font-size="9" fill="#fff">K</text>`)}
        ${this.app("Chrome, third profile", svg`${chrome}<g transform="translate(15 0) scale(0.750)">${tigerArt}</g>`)}
        ${this.app("File Explorer", svg`
          <path d="M0 4Q0 2 2 2H10L13 5V9H0Z" fill="#e0a010" /><path d="M0 7H12L14 5H30V27Q30 28 29 28H1Q0 28 0 27Z" fill="#fccf45" />
          <path d="M5 28V23Q5 21 7 21H23Q25 21 25 23V28Z" fill="#1476c8" />${line("M9 24.500H21", "#0b4d94", 1.5)}`, true)}
        ${this.app("YouTube", svg`<rect y="4" width="30" height="21" rx="5" fill="#ff0033" />${fill("M12 10L19.500 14.500L12 19Z", "#fff")}<g transform="translate(16 -6)">${tigerArt}</g>`, true)}
        ${this.app("VMware Workstation", vmwareArt, true)}
      </div>
      <div class="right">
        <button aria-label="Hidden icons">${pic(16, 10, "0 0 16 10", line("M2 8L8 2L14 8", "#fff", 2))}</button>
        <button class="lang">ENG<br />IN</button>
        <button class="sys" aria-label="Network, volume, battery">
          ${pic(20, 16, "0 0 20 16", svg`${line("M1 6Q10 -3 19 6M4 9Q10 3 16 9M7 12Q10 9 13 12", "#fff", 1.6)}<circle cx="10" cy="14" r="2" fill="#fff" />`)}
          ${pic(20, 18, "0 0 20 18", line("M1 6H4L8.500 2V16L4 12H1ZM11.500 6.500Q13 9 11.500 11.500M14 4Q17 9 14 14M16.500 1.500Q21.500 9 16.500 16.500", "#fff", 1.4))}
          ${pic(20, 14, "0 0 20 14", svg`<rect x="1" y="1" width="16" height="12" rx="3" fill="none" stroke="#fff" stroke-width="1.600" /><rect x="3" y="3" width="8.500" height="8" rx="1" fill="#fff" />${fill("M18 4.500Q20 5 20 7T18 9.500Z", "#fff")}`)}
        </button>
        <button class="clock">11:54<br />15-04-2025</button>
      </div>`;
  }
}

@customElement("app-root")
export class AppRoot extends LitElement {
  static styles = css`
    :host { display: flex; flex-direction: column; height: 100vh; overflow: hidden; background: #000; }
    dvwa-page { flex: 1; min-height: 0; }
    vm-chrome, kali-panel, fox-toolbar, vm-status, win-taskbar { flex: none; }
  `;
  render() {
    return html`<vm-chrome></vm-chrome><kali-panel></kali-panel><fox-toolbar></fox-toolbar><dvwa-page></dvwa-page><vm-status></vm-status><win-taskbar></win-taskbar>`;
  }
}
